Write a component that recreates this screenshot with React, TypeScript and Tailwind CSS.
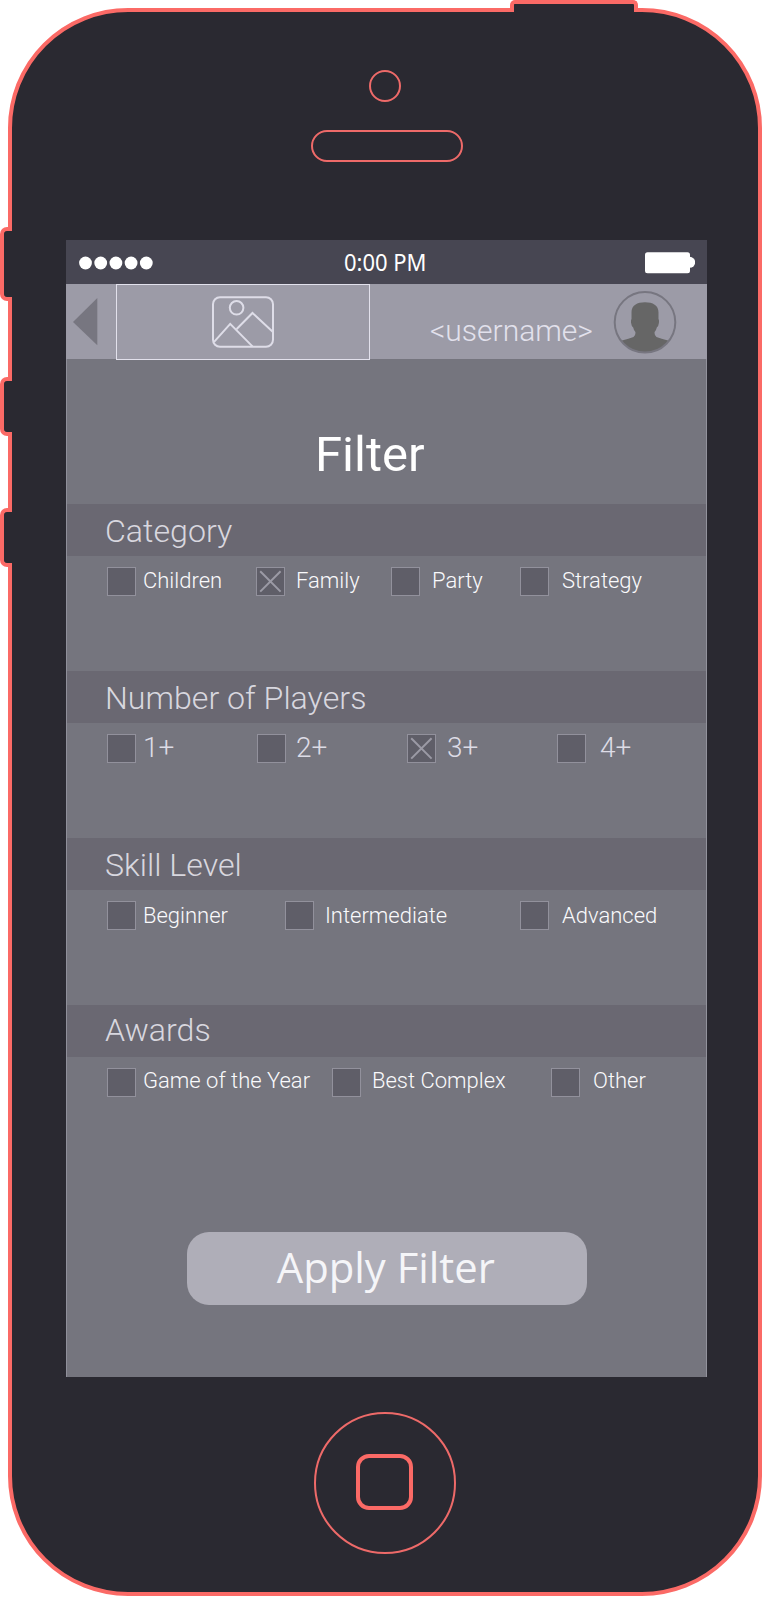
import React from "react";

type Option = { label: string; cell: string; text: string; checked?: boolean };
type Section = { title: string; titleClass: string; row: string; labels: string; options: Option[] };

const small = "text-[22px] text-[#fafafc]";
const large = "text-[28px] text-[#dddce6]";

const sections: Section[] = [
  {
    title: "Category",
    titleClass: "pt-[2px]",
    row: "pt-[11px]",
    labels: small + " -mt-[2px]",
    options: [
      { label: "Children", cell: "w-[149px]", text: "ml-[7px]" },
      { label: "Family", cell: "w-[135px]", text: "ml-[11px]", checked: true },
      { label: "Party", cell: "w-[129px]", text: "ml-[12px]" },
      { label: "Strategy", cell: "w-[150px]", text: "ml-[13px]" },
    ],
  },
  {
    title: "Number of Players",
    titleClass: "pt-[2px]",
    row: "pt-[11px]",
    labels: large + " -mt-[1px]",
    options: [
      { label: "1+", cell: "w-[150px]", text: "ml-[7px]" },
      { label: "2+", cell: "w-[150px]", text: "ml-[10px]" },
      { label: "3+", cell: "w-[150px]", text: "ml-[11px]", checked: true },
      { label: "4+", cell: "w-[110px]", text: "ml-[14px]" },
    ],
  },
  {
    title: "Skill Level",
    titleClass: "pt-[2px]",
    row: "pt-[11px]",
    labels: small,
    options: [
      { label: "Beginner", cell: "w-[178px]", text: "ml-[7px]" },
      { label: "Intermediate", cell: "w-[235px]", text: "ml-[11px]" },
      { label: "Advanced", cell: "w-[150px]", text: "ml-[13px]" },
    ],
  },
  {
    title: "Awards",
    titleClass: "pt-0",
    row: "pt-[11px]",
    labels: small + " -mt-[4px]",
    options: [
      { label: "Game of the Year", cell: "w-[225px]", text: "ml-[7px]" },
      { label: "Best Complex", cell: "w-[219px]", text: "ml-[11px]" },
      { label: "Other", cell: "w-[110px]", text: "ml-[13px]" },
    ],
  },
];

function Checkbox({ checked }: { checked?: boolean }) {
  return (
    <span className="block size-[29px] shrink-0 border border-[#92919c] bg-[#5f5e68]">
      {checked && (
        <svg viewBox="0 0 27 27" className="block size-[27px]" fill="none" stroke="#9b9aa5" strokeWidth="2">
          <path d="M3.2 3.2 23.6 23.6M23.6 3.2 3.2 23.6" />
        </svg>
      )}
    </span>
  );
}

function StatusBar() {
  return (
    <div className="flex h-[44px] w-[641px] items-center justify-between bg-[#474652] pr-3 pl-[13px]">
      <div className="flex w-[265px] pt-[1px]">
        <svg width="74" height="14" viewBox="0 0 74 14" fill="#fff">
          {[6.5, 21.7, 36.9, 52.1, 67.3].map((x) => (
            <circle key={x} cx={x} cy="7" r="6.4" />
          ))}
        </svg>
      </div>
      <span className="origin-left scale-x-[0.955] font-['Noto_Sans'] text-[23px] leading-[44px] whitespace-nowrap text-white">0:00 PM</span>
      <div className="flex flex-1 justify-end pt-[2px]">
        <svg width="50" height="22" viewBox="0 0 50 22" fill="#fff">
          <rect width="45" height="21" rx="2.5" y="0.3" />
          <circle cx="44.7" cy="10.3" r="5.5" />
        </svg>
      </div>
    </div>
  );
}

function Header() {
  return (
    <div className="flex h-[75px] bg-[#9c9ba7]">
      <div className="w-[50px] shrink-0">
        <svg width="50" height="75" viewBox="0 0 50 75">
          <path d="M7 38 31.3 14v47.3z" fill="#777680" />
        </svg>
      </div>
      <div className="flex h-[76px] w-[254px] shrink-0 items-start justify-center border border-[#e2e1ec] pt-[11px]">
        <svg width="63" height="53" viewBox="0 0 63 53" fill="none" stroke="#dedde8" strokeWidth="2">
          <rect x="1" y="1.2" width="60" height="49.6" rx="7" />
          <circle cx="24.6" cy="11.8" r="6.8" />
          <path d="M2.1 45.8 18.2 27.9 40.7 50.6M24.7 33 40.5 17 60.7 35.800" />
        </svg>
      </div>
      <span className="mt-[26px] ml-[60px] w-[164px] font-[Roboto] text-[30px] leading-[42px] font-light whitespace-nowrap text-[#e2e1ec]">
        &lt;username&gt;
      </span>
      <svg className="mt-[6px] ml-[19px] shrink-0" width="64" height="64" viewBox="0 0 64 64">
        <clipPath id="avatar-clip">
          <circle cx="32" cy="32.3" r="30.5" />
        </clipPath>
        <path
          clipPath="url(#avatar-clip)"
          fill="#666666"
          d="M32 12.3C40 12.3 45.8 15.5 45.5 23V29Q46.3 30 45.9 33Q45.5 36.5 43.8 37.5Q43.2 40.5 41.6 42Q41.2 45.5 43.5 47Q48 48.5 55 50.5L59 52V64H5V52L9 50.5Q16 48.5 20.5 47Q22.8 45.5 22.4 42Q20.8 40.5 20.2 37.5Q18.5 36.5 18.1 33Q17.7 30 18.5 29V23C18.2 15.5 24 12.3 32 12.3Z"
        />
        <circle cx="32" cy="32.3" r="30.3" fill="none" stroke="#777680" strokeWidth="2" />
      </svg>
    </div>
  );
}

export default function App() {
  return (
    <div className="relative h-[1597px] w-[763px] overflow-hidden bg-white pt-[7.5px] pl-2">
      <div className="flex h-[1588.5px] w-[754px] flex-col rounded-[120px] border-4 border-[#fb6a66] bg-[#2a2931]">
        <div className="flex h-[228.5px] shrink-0 flex-col items-center">
          <div className="mt-[58.5px] size-8 rounded-full border-2 border-[#ee6a69]" />
          <div className="mt-[28px] ml-[4px] h-8 w-[152px] rounded-full border-2 border-[#ee6a69]" />
        </div>

        <div className="ml-[54px] flex h-[1137px] w-[641px] shrink-0 flex-col bg-[#75757e]">
          <StatusBar />
          <Header />
          <div className="flex flex-1 flex-col border-r border-l border-r-[#92929c] border-l-[#8f8f9a]">
            <h1 className="h-[145px] pt-[66px] pl-[248px] font-[Roboto] text-[49px] leading-[60px] text-white">Filter</h1>
            {sections.map((s) => (
              <section key={s.title} className="h-[167px] shrink-0 font-[Roboto] font-light">
                <h2 className={"h-[52px] bg-[#6a6872] pl-[38px] text-[32.15px] leading-[50px] font-light whitespace-nowrap text-[#d8d7df] " + s.titleClass}>
                  {s.title}
                </h2>
                <div className={"flex pl-[40px] " + s.row}>
                  {s.options.map((o) => (
                    <label key={o.label} className={"flex h-[29px] shrink-0 items-center " + o.cell}>
                      <Checkbox checked={o.checked} />
                      <span className={"leading-[30px] whitespace-nowrap " + s.labels + " " + o.text}>{o.label}</span>
                    </label>
                  ))}
                </div>
              </section>
            ))}
            <button className="mt-[59.5px] ml-[120px] flex h-[73px] w-[399.5px] items-center justify-center rounded-[22px] bg-[#afaeb8] pr-[2px] pb-[3px] font-['Open_Sans'] text-[41.8px] leading-[68px] whitespace-nowrap text-[#f5f5f8]">
              Apply Filter
            </button>
          </div>
        </div>

        <div className="mt-[35px] ml-[302px] flex size-[142px] shrink-0 items-center justify-center rounded-full border-2 border-[#ee6a69]">
          <div className="mt-[-3px] mr-[2px] h-[56px] w-[57px] rounded-[13px] border-4 border-[#fb6a66]" />
        </div>
      </div>

      {/* hardware buttons that break the outline of the body */}
      <div className="absolute top-0 left-[510px] h-3 w-32 rounded-t-[5px] border-4 border-b-0 border-[#fb6a66] bg-[#2a2931]" />
      <div className="absolute top-[227px] left-0 h-[74px] w-3 rounded-l-[7px] border-4 border-r-0 border-[#fb6a66] bg-[#2a2931]" />
      <div className="absolute top-[377px] left-0 h-[59px] w-3 rounded-l-[7px] border-4 border-r-0 border-[#fb6a66] bg-[#2a2931]" />
      <div className="absolute top-[508px] left-0 h-[59px] w-3 rounded-l-[7px] border-4 border-r-0 border-[#fb6a66] bg-[#2a2931]" />
    </div>
  );
}
